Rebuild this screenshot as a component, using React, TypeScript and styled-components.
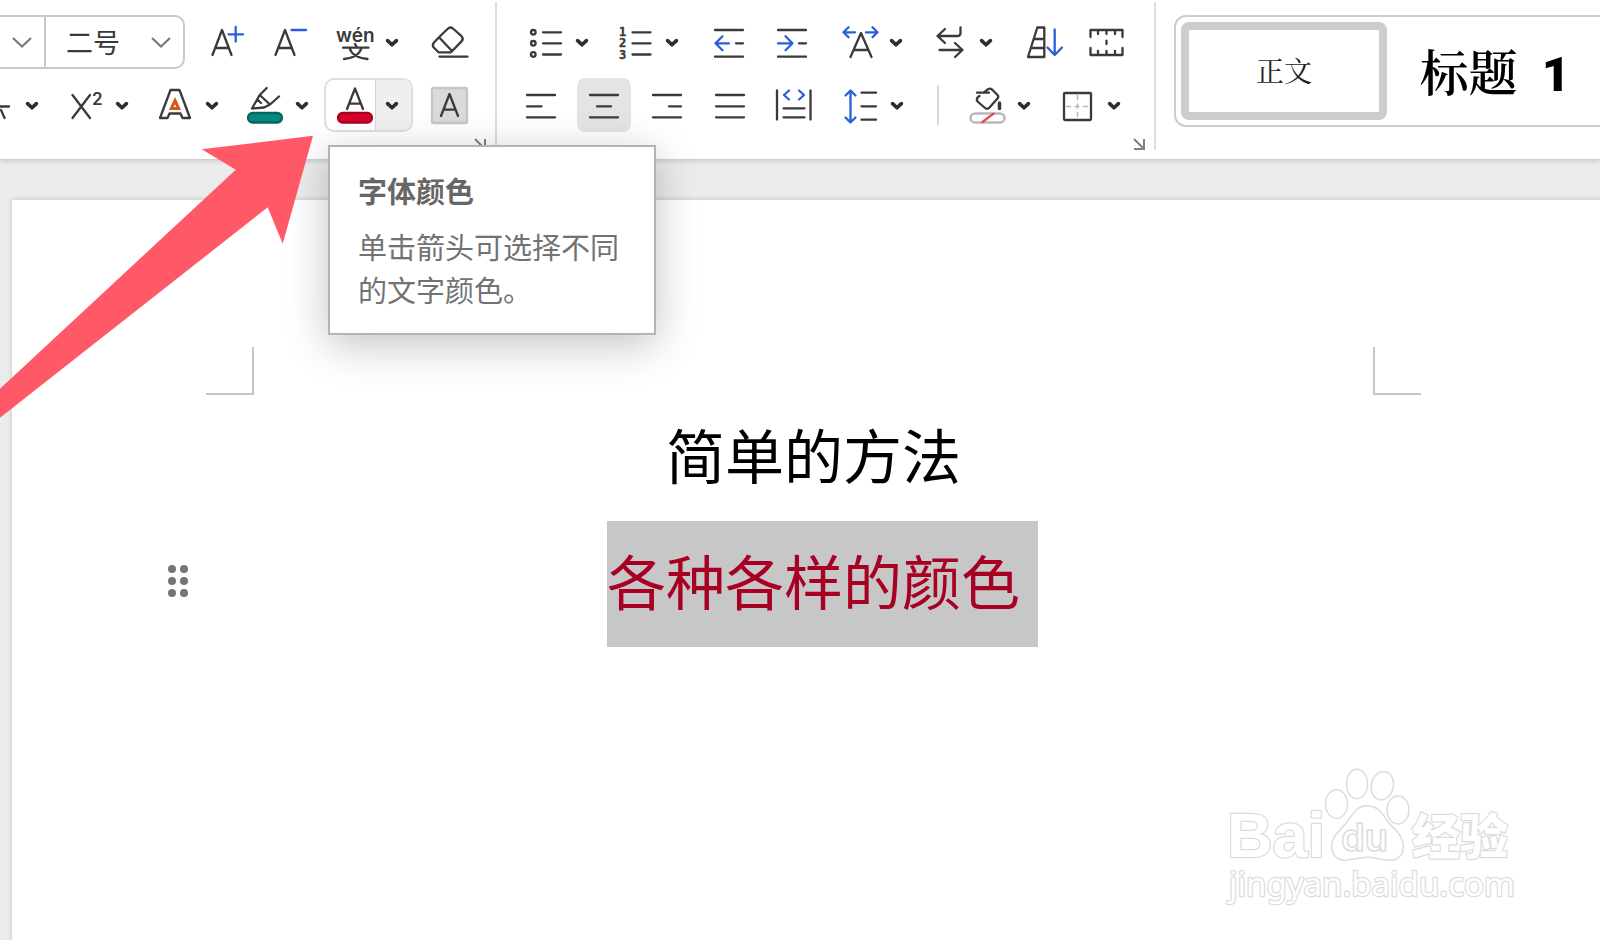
import React from "react";
import styled, { createGlobalStyle } from "styled-components";

const INK = "#3a3a3a";
const BLUE = "#2b5fd9";

const GlobalStyle = createGlobalStyle`
  *, *::before, *::after { box-sizing: border-box; }
  body {
    margin: 0;
    overflow: hidden;
    background: #ececed;
    font-family: "Noto Sans CJK SC", "Noto Sans", sans-serif;
  }
  button, select { font: inherit; color: inherit; }
`;

const Shell = styled.div`
  display: flex;
  flex-direction: column;
  min-height: 100vh;
`;

const Ribbon = styled.header`
  position: relative;
  z-index: 2;
  display: flex;
  height: 160px;
  background: #fff;
  border-bottom: 1px solid #cfcfd0;
  box-shadow: 0 1px 5px rgba(0, 0, 0, 0.16);
`;

const Group = styled.section<{ $clipStart?: boolean }>`
  flex: none;
  display: flex;
  flex-direction: column;
  gap: 9px;
  width: ${(p) => (p.$clipStart ? "497px" : "auto")};
  align-items: ${(p) => (p.$clipStart ? "flex-end" : "stretch")};
  margin: 2px 0 9px;
  padding: 13px ${(p) => (p.$clipStart ? "19px 0 0" : "19px 0 17px")};
  border-right: 2px solid #dedede;
`;

const Row = styled.div`
  flex: none;
  display: flex;
  align-items: center;
  gap: 9px;
  height: 54px;
`;

const Cluster = styled.div`
  display: flex;
  gap: 1px;
`;

const Foot = styled.div`
  display: flex;
  align-self: flex-end;
  margin: -3px -10px 0 0;
`;

const Launcher = styled.button`
  display: flex;
  padding: 0;
  border: 0;
  background: none;
`;

const ToolButton = styled.button<{ $active?: boolean }>`
  flex: none;
  display: flex;
  align-items: center;
  justify-content: center;
  width: 54px;
  height: 54px;
  padding: 0;
  border: 0;
  border-radius: 8px;
  background: ${(p) => (p.$active ? "#e4e4e4" : "transparent")};
`;

const SplitBox = styled.div<{ $hover?: boolean }>`
  position: relative;
  flex: none;
  display: flex;
  width: 89px;
  height: 54px;
  border: 2px solid ${(p) => (p.$hover ? "#dfdfdf" : "transparent")};
  border-radius: 10px;
`;

const SplitMain = styled.button`
  display: flex;
  align-items: center;
  width: 49px;
  padding: 0 0 0 9px;
  border: 0;
  background: none;
`;

const SplitArrow = styled.button<{ $hover?: boolean }>`
  flex: 1;
  display: flex;
  align-items: center;
  padding: 2px 0 0 8px;
  border: 0;
  border-left: 1px solid ${(p) => (p.$hover ? "#d6d6d6" : "transparent")};
  border-radius: 0 8px 8px 0;
  background: ${(p) => (p.$hover ? "#efefef" : "transparent")};
`;

const Separator = styled.span`
  width: 2px;
  height: 40px;
  margin: 0 8px 0 10px;
  background: #d8d8d8;
`;

const ComboGroup = styled.div`
  flex: none;
  display: flex;
  height: 54px;
  margin-right: 4px;
  border: 2px solid #c9c9c9;
  border-radius: 10px;
`;

const ComboCell = styled.label<{ $wide?: boolean }>`
  display: grid;
  align-items: center;
  width: ${(p) => (p.$wide ? "240px" : "139px")};
  padding-right: 12px;
  & + & { border-left: 2px solid #c9c9c9; }
  > * { grid-area: 1 / 1; }
  > svg { justify-self: end; pointer-events: none; }
`;

const Select = styled.select`
  appearance: none;
  width: 100%;
  height: 50px;
  padding: 0 0 2px 20px;
  border: 0;
  background: none;
  color: ${INK};
  font-size: 27px;
`;

const Gallery = styled.div`
  flex: 1;
  display: flex;
  gap: 5px;
  height: 112px;
  margin: 15px -20px 0 18px;
  padding: 5px;
  border: 2px solid #cdcdcd;
  border-radius: 12px;
`;

const StyleTile = styled.button<{ $selected?: boolean }>`
  flex: none;
  display: flex;
  align-items: baseline;
  justify-content: center;
  gap: 24px;
  width: 206px;
  height: 98px;
  padding: 0;
  border: 8px solid ${(p) => (p.$selected ? "#cdcdcd" : "transparent")};
  border-radius: 8px;
  background: none;
  color: ${(p) => (p.$selected ? "#222" : "#000")};
  font-size: ${(p) => (p.$selected ? "28px" : "49px")};
  font-weight: ${(p) => (p.$selected ? 400 : 600)};
  font-family: "Noto Serif CJK SC", "Noto Sans CJK SC", serif;
  line-height: 80px;
  white-space: nowrap;
  b { font-family: Roboto, sans-serif; font-weight: 900; }
`;

const Tooltip = styled.div`
  position: absolute;
  left: 2px;
  top: 65px;
  z-index: 3;
  width: 328px;
  padding: 22px 28px;
  border: 2px solid #b4b4b4;
  background: #fff;
  box-shadow: 0 10px 40px rgba(0, 0, 0, 0.24);
  color: #727272;
  font-size: 29px;
  line-height: 43px;
  strong { display: block; margin-bottom: 13px; color: #666; }
  p { margin: 0; }
`;

const Pointer = styled.svg`
  position: absolute;
  left: 0;
  top: 135px;
  z-index: 4;
  pointer-events: none;
`;

const Desk = styled.main`
  position: relative;
  flex: 1;
  display: flex;
  padding: 40px 0 0 12px;
`;

const Page = styled.article`
  flex: 1;
  margin-right: -15px;
  padding-top: 147px;
  background: #fff;
  box-shadow: 0 0 5px rgba(0, 0, 0, 0.2);
`;

const MarginMarks = styled.div`
  display: flex;
  justify-content: space-between;
  padding: 0 194px;
`;

const Corner = styled.span<{ $side: "left" | "right" }>`
  width: 48px;
  height: 48px;
  border: 0 solid #c6c6c6;
  border-bottom-width: 2px;
  border-${(p) => (p.$side === "left" ? "right" : "left")}-width: 2px;
`;

const Line = styled.div`
  display: grid;
  grid-template-columns: 1fr auto 1fr;
  height: 126px;
  font-size: 59px;
  line-height: 118px;
  white-space: nowrap;
`;

const Paragraph = styled.p`
  grid-column: 2;
  margin: 0;
  color: #000;
`;

const Selected = styled.mark`
  display: block;
  height: 126px;
  margin-right: -18px;
  padding-right: 18px;
  background: #c7c7c7;
  color: #a80022;
`;

const Handle = styled.button`
  display: grid;
  grid-template-columns: 8px 8px;
  gap: 4px;
  width: 20px;
  height: 32px;
  margin: 44px 0 0 156px;
  padding: 0;
  border: 0;
  background: none;
  i { width: 8px; height: 8px; border-radius: 50%; background: #757575; }
`;

const Watermark = styled.svg`
  position: absolute;
  right: 80px;
  bottom: 25px;
`;

const Caret = () => (
  <svg width="16" height="12" viewBox="0 0 16 12" fill="none" stroke="#2e2e2e" strokeWidth="3.6" strokeLinecap="round" strokeLinejoin="round">
    <path d="M3.6 3.6 8 7.8l4.4-4.2" />
  </svg>
);

const WideCaret = () => (
  <svg width="20" height="12" viewBox="0 0 20 12" fill="none" stroke="#7a7a7a" strokeWidth="2.2">
    <path d="M1 2l9 8.500 9-8.500" />
  </svg>
);

const Glyph = ({ children }: { children: React.ReactNode }) => (
  <svg width="40" height="40" viewBox="0 0 40 40" fill="none" stroke={INK} strokeWidth="2.3" strokeLinecap="round" strokeLinejoin="round" style={{ flex: "none" }}>
    {children}
  </svg>
);

const icons = {
  grow: (
    <>
      <path d="M7.500 33 17 8l9.500 25M10.500 26h13" />
      <path stroke={BLUE} d="M23.500 12.300H38M30.700 5v14.500" />
    </>
  ),
  shrink: (
    <>
      <path d="M7.500 33 17 8l9.500 25M10.500 26h13" />
      <path stroke={BLUE} d="M23.500 8H38" />
    </>
  ),
  phonetic: (
    <>
      <text x="1" y="20" fontFamily="Inter, sans-serif" fontSize="19" fontWeight="600" fill={INK} stroke="none">wén</text>
      <path d="M8 25.700h25.500M20 22l1.500 2.500M14.500 26c2 6.500 8 10 18 11M26.500 26c-2 6.500-8 10-17.500 11" />
    </>
  ),
  eraser: (
    <path d="M10 15.300 18.500 7q3-3 6 0l8 7.200q2.500 2.500 0 5.200L22 30.300H9.500l-5-5q-1.500-2.300.5-4.800zL23 29M10.500 34.700h28" />
  ),
  strike: <path d="M6 21.500h28M11 33l3-8M19 8l4 9.500M26 25l3.500 8" />,
  superscript: (
    <>
      <path d="M7.500 10 25 33M25 10 7.500 33" />
      <text x="27" y="20" fontFamily="Inter, sans-serif" fontSize="17" fontWeight="600" fill={INK} stroke="none">2</text>
    </>
  ),
  effects: (
    <>
      <path d="M15.500 5h9L35 33h-7.500L25.500 28.500h-11L12.500 33H5z" />
      <path d="M20 15.500l3.700 8h-7.400z" stroke="#d4581a" strokeWidth="3" strokeLinejoin="miter" />
    </>
  ),
  highlight: (
    <>
      <path d="M21.700 3 14.700 10 7 23.500l12-1L25 19.500l9-8M14.700 10 25 19.500M13 15l3 3" />
      <rect x="3" y="28" width="34" height="9.500" rx="4.700" fill="#07877f" stroke="#04665f" />
    </>
  ),
  fontColor: (
    <>
      <path d="M12 24l8-20.500L28 24M14.500 18.700h11" />
      <rect x="3" y="28" width="34" height="9.500" rx="4.700" fill="#d9002b" stroke="#a80020" />
    </>
  ),
  shading: (
    <>
      <rect x="3" y="3" width="35" height="35" rx="1" fill="#dadada" stroke="#c6c6c6" />
      <path d="M12 31l8.500-22L29 31M14.500 24.700h12" />
    </>
  ),
  bullets: (
    <>
      <path d="M18 10.300h18M18 21.300h18M18 32.500h18" />
      <g><circle cx="8.300" cy="10.300" r="2.300" /><circle cx="8.300" cy="21.300" r="2.300" /><circle cx="8.300" cy="32.500" r="2.300" /></g>
    </>
  ),
  numbers: (
    <>
      <path d="M17.500 10.300h18M17.500 21.300h18M17.500 32.500h18" />
      <g fontFamily="DejaVu Sans Mono, monospace" fontSize="12" fontWeight="700" fill={INK} stroke={INK} strokeWidth="0.4">
        <text x="4" y="14">1</text><text x="4" y="25">2</text><text x="4" y="37">3</text>
      </g>
    </>
  ),
  outdent: (
    <>
      <path d="M6 8h28M6 34.700h28M27 21.300h7" />
      <path stroke={BLUE} d="M20 21.300H6.500M13.500 14.300l-7 7 7 7" />
    </>
  ),
  indent: (
    <>
      <path d="M6 8h28M6 34.700h28M27 21.300h7" />
      <path stroke={BLUE} d="M6 21.300h14.500M13.500 14.300l7 7-7 7" />
    </>
  ),
  scale: (
    <>
      <path d="M11.500 35 22 11l10.500 24M14.500 28h15" />
      <path stroke={BLUE} d="M16 10.300H4.500M9.500 5.300l-5 5 5 5M27 10.300h11.500M33.500 5.300l5 5-5 5" />
    </>
  ),
  wrap: <path d="M31.500 5.500V11q0 3-3 3H8.500M16 7l-7.500 7 7.500 7M10.500 28h23M26 21l7.500 7-7.500 7" />,
  sort: (
    <>
      <path d="M14.300 5.500h7V35H5zM11.300 17h10M8.300 26h13" />
      <path stroke={BLUE} d="M31.700 7.500V33M24.500 25.500l7.200 7.500 7.300-7.500" />
    </>
  ),
  ruler: <path d="M4.500 15V8h32v7M12 8v4M20.500 8v4M29 8v4M4.500 26v7h32v-7M12 33v-4M20.500 33v-4M29 33v-4M20.500 18.700v3.300" />,
  left: <path d="M6 10h28M6 21.300h14.500M6 32.300h28" />,
  center: <path d="M6 10h28M13 21.300h14M6 32.300h28" />,
  right: <path d="M6 10h28M22 21.300h12M6 32.300h28" />,
  justify: <path d="M6 10h28M6 21.300h28M6 32.300h28" />,
  distribute: (
    <>
      <path d="M4 5.500v29M37.500 5.500v29M10.500 23.300h21M10.500 32.300h21" />
      <path stroke={BLUE} d="M16 5.500 11 10l5 4.500M26 5.500l5 4.500-5 4.500" />
    </>
  ),
  spacing: (
    <>
      <path d="M21.500 7.700H36M21.500 21.300H36M21.500 34.700H36" />
      <path stroke={BLUE} d="M10.500 6v31M5.500 10.500l5-5 5 5M5.500 32.500l5 5 5-5" />
    </>
  ),
  fill: (
    <>
      <path d="M10 7.700h12M17 7.500l4-3.300q2-1.400 4 .3l5.500 5.500q1.500 1.800 0 3.500l-8 9q-2.500 2.500-5 0L10.500 16.500q-1.500-2 .5-4.500l1.500-1" />
      <path d="M32.500 18v5.500" strokeWidth="3.500" />
      <rect x="3.500" y="28.500" width="34" height="9" rx="4.500" stroke="#b8b8b8" strokeWidth="2.500" />
      <path d="M15.500 37 26.500 28.700" stroke="#e04a4a" />
    </>
  ),
  borders: (
    <>
      <rect x="7" y="8" width="27" height="27" rx="1" />
      <path d="M20.500 10.500v22M9.500 21.500h22" stroke="#b8b8b8" strokeDasharray="4 4.500" strokeWidth="1.500" />
    </>
  ),
};

type IconName = keyof typeof icons;

const Tool = ({ icon, label, active }: { icon: IconName; label: string; active?: boolean }) => (
  <ToolButton $active={active} aria-label={label} aria-pressed={active}>
    <Glyph>{icons[icon]}</Glyph>
  </ToolButton>
);

const Split = ({ icon, label, hover, children }: { icon: IconName; label: string; hover?: boolean; children?: React.ReactNode }) => (
  <SplitBox $hover={hover}>
    <SplitMain aria-label={label}><Glyph>{icons[icon]}</Glyph></SplitMain>
    <SplitArrow $hover={hover} aria-label={`${label}选项`}><Caret /></SplitArrow>
    {children}
  </SplitBox>
);

const GroupFoot = ({ label }: { label: string }) => (
  <Foot>
    <Launcher aria-label={label}>
      <svg width="12" height="12" viewBox="0 0 12 12" fill="none" stroke="#808080" strokeWidth="2">
        <path d="M1 1l9 9M11 1v10H1" />
      </svg>
    </Launcher>
  </Foot>
);

export default function App() {
  return (
    <Shell>
      <GlobalStyle />
      <Ribbon>
        <Group $clipStart aria-label="字体">
          <Row>
            <ComboGroup>
              <ComboCell $wide>
                <Select aria-label="字体名称"><option aria-label="默认字体" /></Select>
                <WideCaret />
              </ComboCell>
              <ComboCell>
                <Select aria-label="字号"><option>二号</option></Select>
                <WideCaret />
              </ComboCell>
            </ComboGroup>
            <Tool icon="grow" label="增大字号" />
            <Tool icon="shrink" label="减小字号" />
            <Split icon="phonetic" label="拼音指南" />
            <Tool icon="eraser" label="清除格式" />
          </Row>
          <Row>
            <Cluster>
              <Split icon="strike" label="删除线" />
              <Split icon="superscript" label="上标" />
              <Split icon="effects" label="文字效果" />
              <Split icon="highlight" label="突出显示" />
              <Split icon="fontColor" label="字体颜色" hover>
                <Tooltip role="tooltip">
                  <strong>字体颜色</strong>
                  <p>单击箭头可选择不同的文字颜色。</p>
                </Tooltip>
              </Split>
            </Cluster>
            <Tool icon="shading" label="字符底纹" />
          </Row>
          <GroupFoot label="字体设置" />
        </Group>

        <Group aria-label="段落">
          <Row>
            <Cluster>
              <Split icon="bullets" label="项目符号" />
              <Split icon="numbers" label="编号" />
            </Cluster>
            <Tool icon="outdent" label="减少缩进量" />
            <Tool icon="indent" label="增加缩进量" />
            <Cluster>
              <Split icon="scale" label="字符缩放" />
              <Split icon="wrap" label="换行" />
            </Cluster>
            <Tool icon="sort" label="排序" />
            <Tool icon="ruler" label="制表位" />
          </Row>
          <Row>
            <Tool icon="left" label="左对齐" />
            <Tool icon="center" label="居中" active />
            <Tool icon="right" label="右对齐" />
            <Tool icon="justify" label="两端对齐" />
            <Tool icon="distribute" label="分散对齐" />
            <Split icon="spacing" label="行距" />
            <Separator />
            <Cluster>
              <Split icon="fill" label="底纹颜色" />
              <Split icon="borders" label="边框" />
            </Cluster>
          </Row>
          <GroupFoot label="段落设置" />
        </Group>

        <Gallery>
          <StyleTile $selected>正文</StyleTile>
          <StyleTile><span>标题</span><b>1</b></StyleTile>
        </Gallery>

        <Pointer width="314" height="284" viewBox="0 0 314 284" aria-hidden="true">
          <path fill="#ff5967" d="M313 .7 201.700 14.300l34 20.400L0 253.700v29L267.700 72.300l15 36.400z" />
        </Pointer>
      </Ribbon>

      <Desk>
        <Page>
          <MarginMarks>
            <Corner $side="left" />
            <Corner $side="right" />
          </MarginMarks>
          <Line>
            <Paragraph>简单的方法</Paragraph>
          </Line>
          <Line>
            <Handle aria-label="移动段落"><i /><i /><i /><i /><i /><i /></Handle>
            <Paragraph><Selected>各种各样的颜色</Selected></Paragraph>
          </Line>
        </Page>

        <Watermark width="300" height="150" viewBox="0 0 300 150" fill="#fff" stroke="#dcdcdc" strokeWidth="2" role="img" aria-label="Baidu经验">
          <g paintOrder="stroke" strokeWidth="2.500" strokeLinejoin="round">
            <text x="7" y="92" fontFamily="Liberation Sans, sans-serif" fontWeight="700" fontSize="63">Bai</text>
            <text x="192" y="89" fontFamily="Noto Sans CJK SC, sans-serif" fontWeight="900" fontSize="48">经验</text>
            <text x="9" y="131" fontFamily="Noto Sans, sans-serif" fontSize="33">jingyan.baidu.com</text>
          </g>
          <g strokeWidth="1.500">
            <ellipse cx="116.500" cy="39" rx="11" ry="14.300" />
            <ellipse cx="137" cy="19" rx="10.500" ry="14.700" />
            <ellipse cx="162.300" cy="20.700" rx="11" ry="14.300" transform="rotate(12 162.300 20.700)" />
            <ellipse cx="178" cy="45" rx="11" ry="14" />
            <path d="M146.700 40.700c12 0 16 9 22 17 7 8 14.600 13 14.600 24 0 9-6 13.600-13 13.600-9 0-15-3-23.600-3s-14 3-22 3c-8 0-13-6-13-14 0-11 9-16 15-24 6-8 10-16.600 20-16.600z" />
          </g>
          <text x="121" y="86" fontFamily="Inter, sans-serif" fontWeight="600" fontSize="38" strokeWidth="1.500">du</text>
        </Watermark>
      </Desk>
    </Shell>
  );
}
